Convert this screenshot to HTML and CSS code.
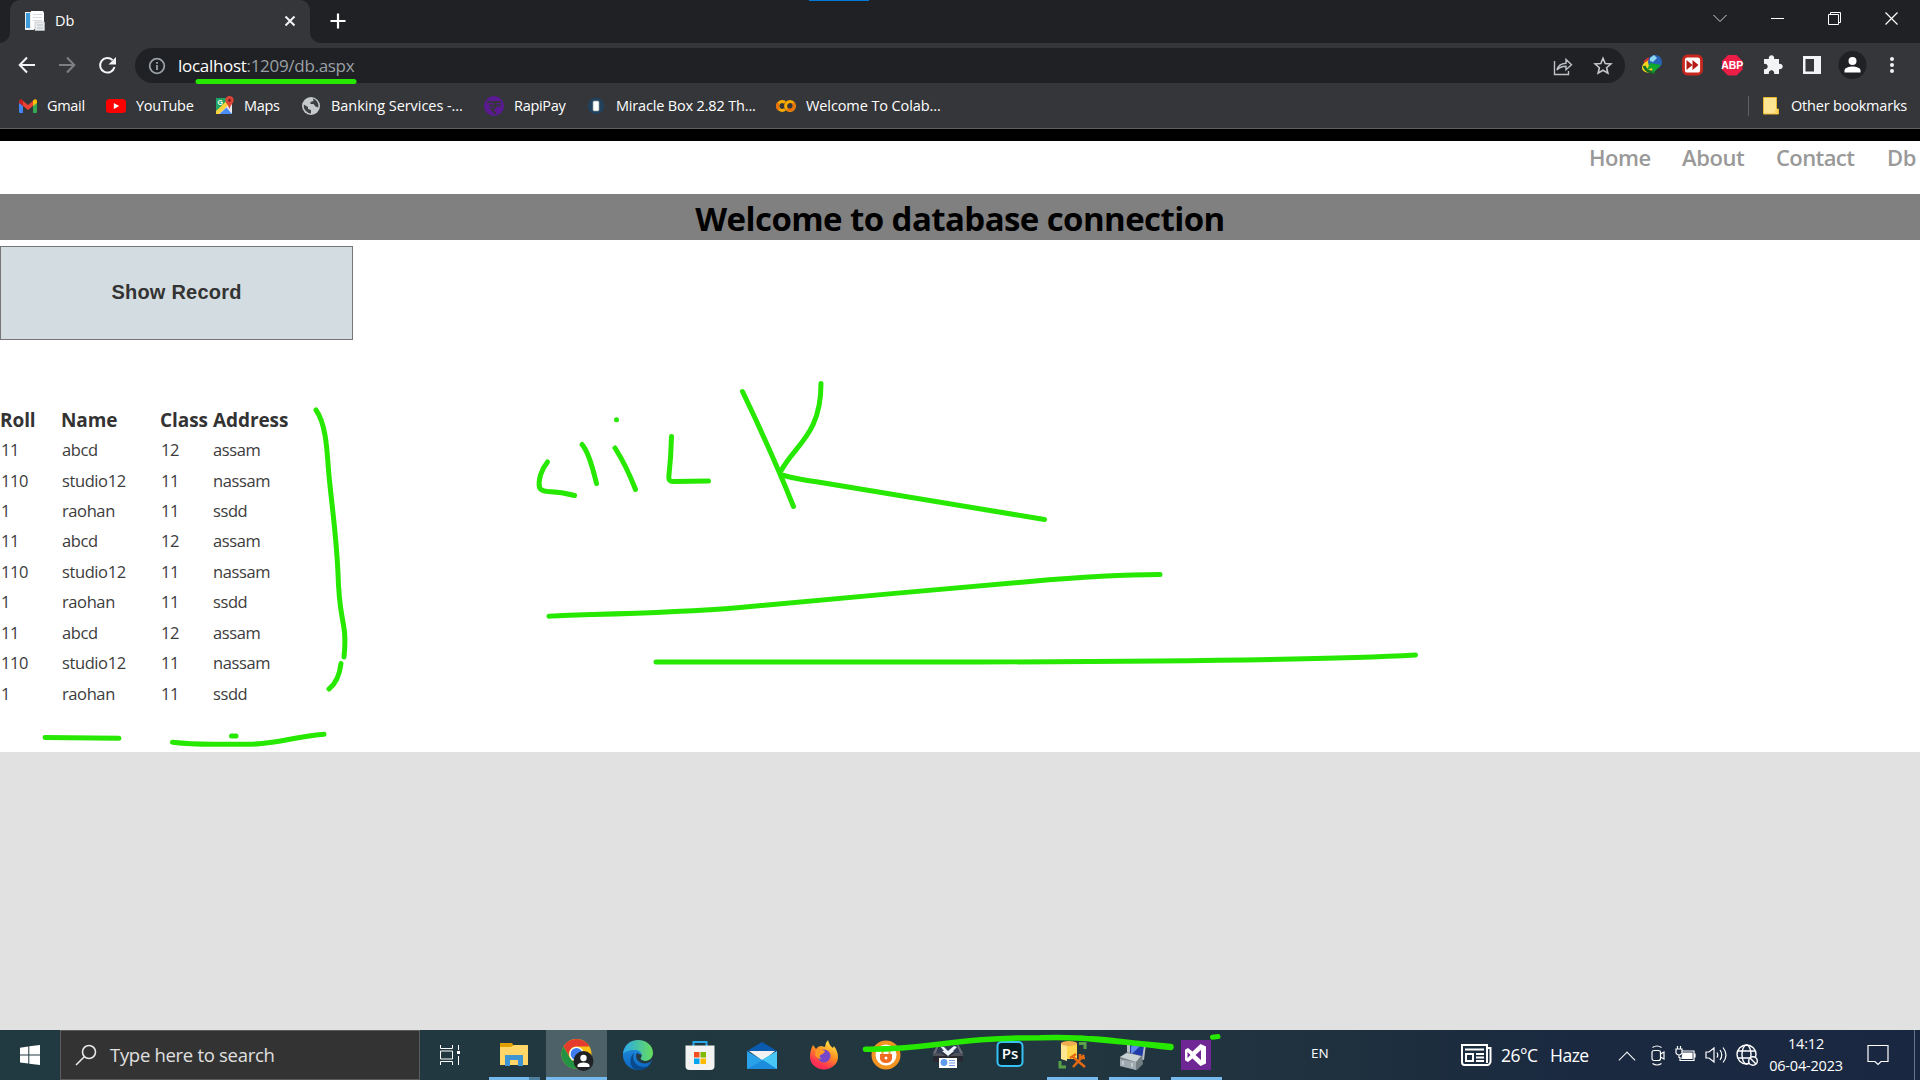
FILE: index.html
```html
<!DOCTYPE html>
<html lang="en">
<head>
<meta charset="utf-8">
<title>Db</title>
<link rel="stylesheet" href="styles.css">
</head>
<body>
<div class="screen">
  <header class="tabstrip">
    <div class="tab">
      <svg class="favicon" width="20" height="20" viewBox="0 0 20 20"><path fill="#e8edf0" d="M0 1h9v18H0z"/><path fill="#3f9bd8" d="M1 2h4v15H1z"/><path fill="#fff" d="M6 0h12l1 2v16H6z"/><path fill="#d5dade" d="M8 3h9v1H8zM8 6h9v1H8zM8 9h9v1H8z"/><path fill="#e9ecee" stroke="#b6bcc0" stroke-width=".7" d="M10 11h9.500v8.500H10z"/><path stroke="#b6bcc0" d="M12 14h6M12 17h6"/></svg>
      <span class="tab-title">Db</span>
      <svg class="tab-close" width="12" height="12" viewBox="0 0 12 12"><path stroke="#f1f3f4" stroke-width="2" d="M1.500 1.500l9 9M10.500 1.500l-9 9"/></svg>
    </div>
    <svg class="new-tab" width="16" height="16" viewBox="0 0 16 16"><path stroke="#fff" stroke-width="2.200" d="M8 .5v15M.5 8h15"/></svg>
    <div class="window-controls">
      <svg width="58" height="36" viewBox="0 0 58 36" fill="none" stroke="#d0d1d2"><path d="M22.500 15l6.500 6.500 6.500-6.500"/></svg>
      <svg width="57" height="36" viewBox="0 0 57 36" fill="none" stroke="#fff"><path d="M22 18.500h13"/></svg>
      <svg width="57" height="36" viewBox="0 0 57 36" fill="none" stroke="#fff"><path d="M22.500 14.500h10v10h-10zM24.500 14.500v-2h10v10h-2"/></svg>
      <svg width="57" height="36" viewBox="0 0 57 36" fill="none" stroke="#fff" stroke-width="1.200"><path d="M22.500 12.500l12 12M34.500 12.500l-12 12"/></svg>
    </div>
  </header>

  <div class="toolbar">
    <svg class="tool" width="40" height="40" viewBox="0 0 40 40" fill="none" stroke="#f1f3f4" stroke-width="2"><path d="M28 20H13M20 12.500L12.700 20l7.300 7.500"/></svg>
    <svg class="tool" width="40" height="40" viewBox="0 0 40 40" fill="none" stroke="#7d7f82" stroke-width="2"><path d="M12 20h15M20 12.500l7.300 7.500-7.300 7.500"/></svg>
    <svg class="tool" width="40" height="40" viewBox="0 0 40 40" fill="none" stroke="#f1f3f4" stroke-width="2"><path d="M27.500 22a7.300 7.300 0 1 1-1.900-6.900"/><path fill="#f1f3f4" stroke="none" d="M29 12v7.500h-7.500z"/></svg>
    <div class="omnibox">
      <svg width="18" height="18" viewBox="0 0 18 18" fill="none" stroke="#9aa0a6" stroke-width="1.800"><circle cx="9" cy="9" r="7.300"/><path d="M9 8v5M9 5v1.800"/></svg>
      <span class="url"><b>localhost</b>:1209/db.aspx</span>
      <svg class="share" width="20" height="20" viewBox="0 0 20 20" fill="none" stroke="#bdc1c6" stroke-width="1.400"><path d="M1.500 5v13.500h14V15M4 14c.8-4 3.500-6.500 9-6.800V3.500l5.500 5.200-5.500 5v-3.500c-4.500 0-7 1.300-9 3.800z"/></svg>
      <svg width="20" height="20" viewBox="0 0 20 20" fill="none" stroke="#c5c8cb" stroke-width="1.600"><path d="M10 2.300l2.200 5.200 5.700.5-4.300 3.700 1.300 5.500-4.900-2.900-4.900 2.900 1.300-5.500L2.100 8l5.700-.5z"/></svg>
    </div>
    <div class="extensions">
      <svg width="40" height="40" viewBox="0 0 40 40"><ellipse cx="18" cy="21" rx="8.500" ry="6" fill="#f5d51e" transform="rotate(-25 18 21)"/><path d="M12 21q3 7 11 6" fill="none" stroke="#176b26" stroke-width="3"/><path d="M12 17l5-4" stroke="#d33" stroke-width="2"/><circle cx="23" cy="17" r="7" fill="#2862b8"/><path d="M18 13l4-3 3 3-4 4-3-1z" fill="#8ed6f2"/><path d="M18 18l11 2-8 8-1-5-5 2z" fill="#10a82d"/></svg>
      <svg width="40" height="40" viewBox="0 0 40 40"><rect x="11.500" y="11" width="18" height="18" rx="4" fill="#fff" stroke="#c8271e" stroke-width="2.800"/><path fill="#b51b16" d="M14.500 15l6 5-6 5zM20.500 15l6 5-6 5z"/></svg>
      <svg width="40" height="40" viewBox="0 0 40 40"><path fill="#ed1e45" d="M16 10h8.500l6 6v8.500l-6 6H16l-6-6V16z"/><text x="20.300" y="24" class="abp">ABP</text></svg>
      <svg width="40" height="40" viewBox="0 0 40 40"><path fill="#f1f3f4" d="M12 14h5a2.700 2.700 0 1 1 5 0h5v5a2.700 2.700 0 1 1 0 5v5h-5a2.700 2.700 0 1 0-5 0h-5v-5a2.700 2.700 0 1 0 0-5z"/></svg>
      <svg width="40" height="40" viewBox="0 0 40 40"><path fill="#f1f3f4" fill-rule="evenodd" d="M11 11h18v18H11zM13.500 14v12.500h8.500V14z"/></svg>
      <svg width="40" height="40" viewBox="0 0 40 40"><circle cx="20.500" cy="20" r="14" fill="#202124"/><circle cx="20.500" cy="16" r="4" fill="#fff"/><path fill="#fff" d="M12.500 27.500v-2c0-3 5-4 8-4s8 1 8 4v2z"/></svg>
      <svg width="40" height="40" viewBox="0 0 40 40" fill="#f1f3f4"><circle cx="20" cy="14" r="2"/><circle cx="20" cy="20" r="2"/><circle cx="20" cy="26" r="2"/></svg>
    </div>
  </div>

  <nav class="bookmarks">
    <div class="bm bm-gmail"><svg width="20" height="20" viewBox="0 0 20 20"><path fill="#4285f4" d="M1 5h4v12H2q-1 0-1-1z"/><path fill="#34a853" d="M15 5h4v11q0 1-1 1h-3z"/><path fill="#ea4335" d="M4 4l6 5 6-5v5l-6 5-6-5z"/><path fill="#c5221f" d="M1 5.500C1 3 3 2.500 5 4.500V10L1 7z"/><path fill="#fbbc04" d="M19 5.500c0-2.500-2-3-4-1V10l4-3z"/></svg><span>Gmail</span></div>
    <div class="bm bm-yt"><svg width="20" height="20" viewBox="0 0 20 20"><rect y="3" width="20" height="14" rx="3.500" fill="#f00"/><path fill="#fff" d="M7.800 7v6l5.400-3z"/></svg><span>YouTube</span></div>
    <div class="bm bm-maps"><svg width="20" height="20" viewBox="0 0 20 20"><rect x="1" y="2" width="16" height="16" rx="1" fill="#e8eaed"/><path fill="#1fa463" d="M1 2h14L1 16z"/><path fill="#fcd23c" d="M1 15L11 5.500l3 3L4 18H1z"/><path fill="#4b8df8" d="M4.500 18l7-6.500L17 18z"/><text x="2.500" y="9" class="mini">G</text><path fill="#db4437" d="M14.500 0a4.200 4.200 0 0 1 4.200 4.300c0 3-3.300 4.500-3.800 8.200h-.8c-.5-3.700-3.800-5.200-3.800-8.200A4.200 4.200 0 0 1 14.500 0z"/><circle cx="14.500" cy="4.300" r="1.500" fill="#7b231b"/></svg><span>Maps</span></div>
    <div class="bm bm-bank"><svg width="20" height="20" viewBox="0 0 20 20"><circle cx="10" cy="10" r="9" fill="#c6c9cc"/><path fill="#3c4043" d="M12 2.500a7.500 7.500 0 0 1 5.200 9l-2.700-1-2-2.500H9.500V6l3-1zM2.800 8.500L7 11v2l3 1v3.400a7.500 7.500 0 0 1-7.200-8.900z"/></svg><span>Banking Services -...</span></div>
    <div class="bm bm-rapi"><svg width="20" height="20" viewBox="0 0 20 20"><circle cx="10" cy="10" r="10" fill="#5b1a91"/><path fill="none" stroke="#35363a" stroke-width="1.800" d="M3 6h14M5 9.500h12M8 6c6 0 5 7-1 7l5 5"/></svg><span>RapiPay</span></div>
    <div class="bm bm-miracle"><svg width="20" height="20" viewBox="0 0 20 20"><circle cx="10" cy="10" r="8.300" fill="#21415c"/><rect x="7" y="5" width="6" height="10" rx="1" fill="#fff" stroke="#899" stroke-width=".7"/></svg><span>Miracle Box 2.82 Th...</span></div>
    <div class="bm bm-colab"><svg width="20" height="20" viewBox="0 0 20 20" fill="none" stroke-width="3"><path stroke="#f9ab00" d="M9 13.400A4.400 4.400 0 1 1 9 6.600"/><circle cx="14" cy="10" r="4.400" stroke="#f9ab00"/><path stroke="#e8710a" d="M10.900 13.100A4.400 4.400 0 0 0 17.100 6.900M2.500 7A4.400 4.400 0 0 0 3 13.500"/></svg><span>Welcome To Colab...</span></div>
    <div class="bm bm-other"><svg width="20" height="20" viewBox="0 0 20 20"><path fill="#ffe591" stroke="#e9b92f" d="M2.500 1.500h13v11.500h2v5h-15z"/><path fill="#ffd35a" d="M14 14h3v4h-3z"/></svg><span>Other bookmarks</span></div>
  </nav>

  <main class="page">
    <ul class="menu"><li class="m-home">Home</li><li class="m-about">About</li><li class="m-contact">Contact</li><li class="m-db">Db</li></ul>
    <h1 class="banner"><span>Welcome to database connection</span></h1>
    <button class="show">Show Record</button>
    <table class="records">
      <colgroup><col class="c-roll"><col class="c-name"><col class="c-class"><col class="c-address"></colgroup>
      <thead><tr><th>Roll</th><th>Name</th><th>Class</th><th>Address</th></tr></thead>
      <tbody>
        <tr><td>11</td><td>abcd</td><td>12</td><td>assam</td></tr>
        <tr><td>110</td><td>studio12</td><td>11</td><td>nassam</td></tr>
        <tr><td>1</td><td>raohan</td><td>11</td><td>ssdd</td></tr>
        <tr><td>11</td><td>abcd</td><td>12</td><td>assam</td></tr>
        <tr><td>110</td><td>studio12</td><td>11</td><td>nassam</td></tr>
        <tr><td>1</td><td>raohan</td><td>11</td><td>ssdd</td></tr>
        <tr><td>11</td><td>abcd</td><td>12</td><td>assam</td></tr>
        <tr><td>110</td><td>studio12</td><td>11</td><td>nassam</td></tr>
        <tr><td>1</td><td>raohan</td><td>11</td><td>ssdd</td></tr>
      </tbody>
    </table>
  </main>
  <div class="backdrop"></div>

  <footer class="taskbar">
    <div class="start"><svg width="20" height="20" viewBox="0 0 20 20" fill="#fff"><path d="M0 2.700l8.300-1.200v8H0zM9.300 1.300L20 0v9.500H9.300zM0 10.500h8.300v8.100L0 17.400zM9.300 10.500H20V20L9.300 18.700z"/></svg></div>
    <div class="search"><svg width="22" height="22" viewBox="0 0 22 22" fill="none" stroke="#e8e8e8" stroke-width="1.600"><circle cx="14" cy="8" r="6.500"/><path d="M9.300 12.700L1 21"/></svg><span>Type here to search</span></div>
    <div class="taskview"><svg width="20" height="20" viewBox="0 0 20 20" fill="none" stroke="#fff"><path d="M.5 0v3.500h12V0M.5 6h12v8H.5zM.5 20v-3.500h12V20M18.500 0v5M18.500 11v9"/><path fill="#fff" stroke="none" d="M17 6h3v3h-3z"/></svg></div>
    <div class="apps">
      <div class="app open stacked"><svg width="30" height="30" viewBox="0 0 30 30"><path fill="#e0a100" d="M1 3h12l2 3v5H1z"/><path fill="#ffd667" d="M1 7h11l3-2h14v20H1z"/><path fill="#3f94d2" d="M6 15h18v11h-5v-6h-8v6H6z"/></svg></div>
      <div class="app open active"><svg width="34" height="34" viewBox="0 0 34 34"><circle cx="15.500" cy="16" r="15" fill="#fbc116"/><path fill="#e33b2e" d="M2.500 8.500A15 15 0 0 1 28.500 8.500H15.500A7.500 7.500 0 0 0 9 20z"/><path fill="#229342" d="M2.500 8.500A15 15 0 0 0 15.500 31l6.500-11A7.500 7.500 0 0 1 9 20z"/><circle cx="15.500" cy="16" r="7.300" fill="#fff"/><circle cx="15.500" cy="16" r="5.900" fill="#3d7df0"/><circle cx="22.500" cy="23" r="10" fill="#202124"/><circle cx="22.500" cy="20" r="3.200" fill="#fff"/><path fill="#fff" d="M16.500 29v-2q1-2.500 6-2.500t6 2.500v2z"/></svg></div>
      <div class="app"><svg width="30" height="30" viewBox="0 0 30 30"><defs><linearGradient id="ea"><stop stop-color="#2aa7ec"/><stop offset="1" stop-color="#67de5c"/></linearGradient><linearGradient id="eb" x2="0" y2="1"><stop stop-color="#2390de"/><stop offset="1" stop-color="#0b67c4"/></linearGradient></defs><path fill="url(#eb)" d="M0 14C1 5 8 1 15 3c6 2 8 8 4 11-2 1-3 4-1 6 3 3 8 2 11 0-2 6-8 10-14 10A15 15 0 0 1 0 14z"/><path fill="url(#ea)" d="M0 14C1 5 7 0 15 0c9 0 15 6 15 13 0 5-4 8-8 8-3 0-5-1-5-2 0-1 1.500-1.500 1.500-4 0-3-3-5-7-5C6 10 2 12 0 14z"/><path fill="#0a4a8c" d="M11 13c-3 8 3 14 10 14 3 0 6-2 7.500-5-1 4-6 8-13.500 8C7 30 5 18 11 13z"/><path fill="#233943" d="M14 13c-3 4 1 10.500 8 10.500 3 0 5-1 6.500-2.500v-.7c-5 2-9.500.5-11-1.300 0-1 1-1.500 1-4z"/></svg></div>
      <div class="app"><svg width="30" height="30" viewBox="0 0 30 30"><path fill="none" stroke="#28a8ea" stroke-width="2" d="M8.500 7V2h13v5"/><path fill="#f2f2f2" d="M.5 5.500h29V26q0 4-4 4h-21q-4 0-4-4z"/><path fill="#f25022" d="M9 12h5.500v5.500H9z"/><path fill="#7fba00" d="M15.500 12H21v5.500h-5.500z"/><path fill="#00a4ef" d="M9 18.500h5.500V24H9z"/><path fill="#ffb900" d="M15.500 18.500H21V24h-5.500z"/></svg></div>
      <div class="app"><svg width="30" height="30" viewBox="0 0 30 30"><path fill="#0a5ab0" d="M0 11l15-9 15 9z"/><path fill="#f2f2f2" d="M2 11h26L16 21z"/><path fill="#2aa2ea" d="M0 11l15 9 15-9v18H0z"/><path fill="#49c8f5" d="M15 20l15-9v18z"/><path fill="#1c8ddd" d="M0 29h30L16 20z"/></svg></div>
      <div class="app"><svg width="30" height="30" viewBox="0 0 30 30"><defs><linearGradient id="fx" x1=".8" y1="0" x2=".3" y2="1"><stop stop-color="#fff44f"/><stop offset=".45" stop-color="#ff9320"/><stop offset=".85" stop-color="#ff2f54"/></linearGradient></defs><path fill="url(#fx)" d="M4 5l3 4q2-3 5-3l4 1q0-4 3-7 1 5 5 8l1-2c3 4 4 8 4 11a14 12.500 0 0 1-28 0c0-5 1-8 3-12z"/><circle cx="15" cy="16" r="6.500" fill="#7648c9"/><path fill="#ff9a27" d="M7 10q6-1 9 1-1 3-5 4-1 3 2 4-5 0-7-4z"/></svg></div>
      <div class="app"><svg width="30" height="30" viewBox="0 0 30 30"><circle cx="15" cy="15" r="12.500" fill="#fff" stroke="#f39322" stroke-width="4"/><path fill="#f06c23" d="M9 14h12v5q-1 4-6 4t-6-4z"/><path fill="none" stroke="#f5a33c" stroke-width="2" d="M11.500 14V9.500q3.500-4 7 0V14"/><circle cx="15" cy="18" r="1.500" fill="#fff"/></svg></div>
      <div class="app"><svg width="30" height="30" viewBox="0 0 30 30"><path fill="#6a6d78" d="M5 4h20l5 9H0z"/><path fill="#333c55" d="M6 5h18l3 8H3z"/><path fill="#eff3fb" d="M7 6l4 1 4 4 6-5 3 1-9 9z"/><path fill="#292a31" d="M0 13h30v9H0z"/><path fill="#50525b" d="M0 13h8l7 4 7-4h8v3H0z"/><path fill="#eff3fb" d="M9 11h12l-6 5z"/><path fill="#fff" d="M6 18h18v10H6z"/><circle cx="11" cy="22.500" r="3.400" fill="#5f9ced"/><path stroke="#729be9" d="M16 20.500h6M16 23h6M16 25.500h6"/></svg></div>
      <div class="app ps-app"><svg width="28" height="28" viewBox="0 0 28 28"><rect x="1.500" y="2" width="25" height="24" rx="4" fill="#071e27" stroke="#38c1f3" stroke-width="2"/><text x="14" y="19" class="ps">Ps</text></svg></div>
      <div class="app open"><svg width="30" height="30" viewBox="0 0 30 30"><path fill="#ffd64b" d="M4 3h16v16H4z"/><path fill="#ffe791" d="M4 3h6v18l-6-2z"/><ellipse cx="12" cy="3.500" rx="8" ry="2.500" fill="#efad50"/><path stroke="#58a149" stroke-width="3" fill="none" d="M22 3.500h6V9M3 21v6h6"/><path stroke="#e46a12" stroke-width="2.500" fill="none" d="M16 17l12 10M27 15L16 27M13 18l6-4M23 14v4h5"/></svg></div>
      <div class="app open"><svg width="30" height="30" viewBox="0 0 30 30"><path fill="#b5bdc0" d="M8 1l19 3-2 16-17-2z"/><path fill="#2139a9" d="M11 4l14 2-2 12-12-2z"/><path fill="#6089e8" d="M14 5l7 1-9 9V7z"/><path fill="#737e82" d="M1 17l7-5 15 4 1 8-6 6-17-4z"/><path fill="#c8d1d4" d="M1 17l7-4 14 3-5 6z"/><path fill="#9eaaaf" d="M1 19l16 3v8L1 26z"/><path stroke="#e4e8e9" d="M4 21v4M13 23v4"/></svg></div>
      <div class="app open"><svg width="30" height="30" viewBox="0 0 30 30"><path fill="#6e2795" d="M0 0h30v30H0z"/><path fill="#fff" fill-rule="evenodd" d="M19.500 4L25 6.500v17L19.500 26l-8-7.500L7 22l-3-1.700V9.700L7 8l4.500 3.500zM20 10l-5.500 5 5.500 5zM6.500 12v6l3-3z"/></svg></div>
    </div>
    <div class="lang">EN</div>
    <div class="weather"><svg width="31" height="22" viewBox="0 0 31 22" fill="none" stroke="#fff" stroke-width="2"><path d="M26 4h3.500v14q-1 3-3 3h-23Q1 21 1 18V1h25v18"/><path d="M4 5.500h19M15 10h8M15 13.500h8M15 17h8"/><path d="M5 10h7v7H5z"/></svg><span class="temp">26°C</span><span class="haze">Haze</span></div>
    <div class="tray">
      <svg width="17" height="22" viewBox="0 0 17 22" fill="none" stroke="#fff" stroke-width="1.200"><rect x="2" y="6.500" width="8.500" height="10" rx="2"/><path d="M10.500 10l3.500-2v7l-3.500-2M2.500 3.500q4.500-3 9 0M2.500 19.500q4.500 3 9 0"/></svg>
      <svg width="22" height="22" viewBox="0 0 22 22" fill="none" stroke="#fff" stroke-width="1.200"><path d="M7 7h12v9.500H5V13M20 9.500v4M1 5h6v4q-1 2-3 2T1 9zM2.500 2v3M5.500 2v3M4 11v3"/><path fill="#fff" d="M8 9h9v5.500H7z"/></svg>
      <svg width="23" height="22" viewBox="0 0 23 22" fill="none" stroke="#fff" stroke-width="1.200"><path d="M1 8h3l5-4v14l-5-4H1zM12 8.500q1.500 2.500 0 5M15 6q3.500 5 0 10M18 3.500q6 7.500 0 15"/></svg>
      <svg width="22" height="22" viewBox="0 0 22 22" fill="none" stroke="#fff" stroke-width="1.400"><circle cx="10.500" cy="10.500" r="9.500"/><ellipse cx="10.500" cy="10.500" rx="4.500" ry="9.500"/><path d="M2 7h17M2 14h17"/><circle cx="17" cy="17" r="4.300" fill="#1b2a40"/><path d="M14 14l6 6"/></svg>
    </div>
    <div class="clock"><span class="time">14:12</span><span class="date">06-04-2023</span></div>
    <svg class="notify" width="22" height="22" viewBox="0 0 22 22" fill="none" stroke="#fff" stroke-width="1.200"><path d="M1 1.500h20v16h-7l-3 3-3-3H1z"/></svg>
    <div class="peek"></div>
  </footer>

  <div class="accent"></div>
  <svg class="ink" width="1920" height="1080" viewBox="0 0 1920 1080">
    <path d="M198 81.500H354"/>
    <path d="M547.500 462C541 470 538 480 539.500 487.500Q541 491 548 491.500Q562 492 574.500 495.500"/>
    <path d="M582 444.500Q589 452 596.500 483.500M615 448Q626 465 635.500 489.500M616.500 419.700v.1"/>
    <path d="M671.500 436.500Q671 458 668.800 477Q668.500 481.500 673 481.500L708.500 481"/>
    <path d="M742.500 391.500C760 428 776 463 793.500 506.500M821 383.500C821 434 796 444 781.500 470M782 475Q796 479 818 482L1044.500 519.500"/>
    <path d="M549 616.300C567 614 650 615 740 607.500C850 598 925 590 1030 581.500C1080 577 1125 574.500 1160 574.500"/>
    <path d="M656 662H980C1160 661.500 1330 660 1415.500 655"/>
    <path d="M316 410C326 424 327 450 328.500 470C331 500 336 530 338 573C339 610 342 612 344.500 632Q345.500 644 344 657M341 663.500Q339 681 329 689"/>
    <path d="M45 737.500L119 738.300M172.500 742.300Q190 744.300 212 744.300H248C280 744 290 737 324 734.300M231.500 736h4.500"/>
    <path class="broad" d="M865.500 1049.200C930 1050 950 1037.700 1040 1037.700C1095 1036 1130 1043 1171 1047.500M1080 1038Q1125 1042 1171 1046.500"/>
    <path d="M1212.500 1037.300l5.500-.8"/>
  </svg>
</div>
</body>
</html>
```
FILE: styles.css
```css
* { box-sizing: border-box; }
body { margin: 0; font-family: "Open Sans", "Noto Sans", sans-serif; overflow: hidden; }
svg { display: block; flex: none; }
.screen { position: relative; width: 1920px; height: 1080px; display: flex; flex-direction: column; background: #e1e1e1; white-space: nowrap; }

.tabstrip { height: 43px; background: #202124; display: flex; padding-left: 10px; flex: none; }
.tab { position: relative; width: 300px; height: 43px; background: #35363a; border-radius: 10px 10px 0 0; display: flex; align-items: center; padding: 0 14px 1px 15px; }
.tab::before, .tab::after { content: ""; position: absolute; bottom: 0; width: 10px; height: 10px; }
.tab::before { left: -10px; background: radial-gradient(circle at 0 0, #202124 9.5px, #35363a 10px); }
.tab::after { right: -10px; background: radial-gradient(circle at 100% 0, #202124 9.5px, #35363a 10px); }
.tab-title { margin: -2px 0 0 10px; font-size: 14.5px; color: #fff; }
.tab-close { margin-left: auto; }
.new-tab { margin: 13px 0 0 20px; }
.window-controls { display: flex; margin-left: auto; }

.toolbar { height: 45px; background: #35363a; display: flex; align-items: center; padding: 0 7px 0 7px; flex: none; }
.omnibox { width: 1490px; height: 35px; margin-left: 8px; border-radius: 18px; background: #202124; display: flex; align-items: center; padding: 0 12px 0 13px; }
.tool, .extensions { margin-bottom: 1px; }
.url { margin-left: 12px; font-size: 17px; letter-spacing: -.3px; color: #9aa0a6; }
.url b { font-weight: 400; color: #fff; }
.share { margin: 0 20px 0 auto; }
.extensions { display: flex; margin-left: 7px; }
.abp { font: 700 10.5px "Liberation Sans", sans-serif; fill: #fff; text-anchor: middle; }

.bookmarks { height: 41px; background: #35363a; border-bottom: 1px solid #5f6063; display: flex; align-items: center; padding: 0 0 5px 18px; color: #fff; font-size: 14.5px; letter-spacing: -.3px; flex: none; }
.bm { display: flex; align-items: center; gap: 10px; }
.bm-gmail { width: 88px; gap: 9px; }
.bm-yt { width: 109px; gap: 10px; }
.bm-maps { width: 86px; gap: 9px; }
.bm-bank { width: 183px; letter-spacing: -.05px; }
.bm-rapi { width: 102px; }
.bm-miracle { width: 190px; letter-spacing: -.17px; }
.bm-colab { width: 170px; letter-spacing: -.1px; }
.bm-other { margin-left: auto; width: 172px; height: 20px; border-left: 1px solid #606165; padding-left: 12px; letter-spacing: -.2px; }
.mini { font: 700 7px "Liberation Sans", sans-serif; fill: #fff; }

.page { height: 623px; border-top: 12px solid #000; background: #fff; flex: none; color: #333; }
.menu { list-style: none; margin: 0; padding: 0; height: 53px; display: flex; justify-content: flex-end; font-size: 22px; line-height: 32px; font-weight: 600; color: #999; }
.m-home { width: 93px; letter-spacing: -.5px; }
.m-about { width: 94px; letter-spacing: -.4px; }
.m-contact { width: 111px; letter-spacing: -.6px; }
.m-db { width: 33px; letter-spacing: -.4px; }
.banner { height: 46px; margin: 0; background: #808080; color: #000; display: flex; align-items: center; justify-content: center; font-size: 33px; line-height: 46px; letter-spacing: -.58px; padding-top: 3px; }
.show { display: block; width: 353px; height: 94px; margin: 6px 0 0; padding: 0 0 2px; background: #d3dce0; border: 1px solid #767676; border-radius: 0; font: 700 20px "Liberation Sans", sans-serif; letter-spacing: .22px; color: #333; }
.records { margin-top: 65px; width: 320px; table-layout: fixed; border-collapse: collapse; }
.c-roll { width: 61px; }
.c-name { width: 99px; }
.c-class { width: 52px; }
.c-address { width: 108px; }
.records th, .records td { padding: 0; text-align: left; height: 30.45px; line-height: 28px; }
.records td { padding-left: 1px; }
.records th:last-child, .records td:last-child { padding-left: 1px; }
.records th { font-size: 19px; font-weight: 700; letter-spacing: -.08px; }
.records td { font-size: 16.5px; letter-spacing: -.4px; color: #3c3c3c; padding-bottom: 1px; }

.backdrop { flex: 1; background: #e1e1e1; }

.taskbar { height: 50px; flex: none; display: flex; align-items: center; background: linear-gradient(90deg, #213941 0%, #223740 55%, #1f303e 70%, #1a2940 82%, #1a2741 100%); color: #fff; }
.start { width: 60px; padding-left: 20px; }
.search { width: 360px; height: 50px; background: #333; border: 1px solid #5c5c5c; display: flex; align-items: center; padding-left: 14px; font-size: 18.5px; color: #e0e0e0; letter-spacing: -.3px; }
.search span { margin: -2px 0 0 13px; }
.taskview { width: 63px; padding-left: 20px; }
.apps { display: flex; height: 50px; }
.app { position: relative; width: 62px; display: flex; align-items: center; justify-content: center; }
.app.open::after { content: ""; position: absolute; left: 6px; right: 5px; bottom: 0; height: 3px; background: #76b9ed; }
.app.stacked::after { background: linear-gradient(90deg, #76b9ed 40px, #50809f 40px); }
.app.active { background: #4d6168; border-left: 1px solid #213941; padding-left: 2px; }
.app.active::after { left: 0; right: 0; }
.ps-app { padding-bottom: 2px; }
.ps { font: 600 15px "Open Sans", sans-serif; fill: #fff; text-anchor: middle; }
.lang { margin: 0 0 4px 84px; width: 150px; font-size: 13.5px; letter-spacing: -.1px; }
.weather { display: flex; align-items: center; width: 158px; font-size: 17.5px; letter-spacing: -.5px; }
.temp { margin-left: 9px; width: 49px; }
.tray { display: flex; align-items: center; gap: 8px; }
.tray::before { content: ""; width: 11px; height: 11px; border: solid #fff; border-width: 1.3px 0 0 1.3px; transform: rotate(45deg); margin: 9px 9px 0 2px; }
.clock { width: 90px; margin-left: 3px; display: flex; flex-direction: column; align-items: center; font-size: 14.5px; line-height: 22px; letter-spacing: -.2px; }
.notify { margin-left: 16px; }
.peek { width: 1px; height: 50px; background: #68758a; margin: 0 5px 0 auto; }

.accent { position: absolute; left: 809px; top: 0; width: 60px; height: 1px; background: #0078d7; }
.ink { position: absolute; left: 0; top: 0; fill: none; stroke: #27e800; stroke-width: 5; stroke-linecap: round; stroke-linejoin: round; }
.broad { stroke-width: 5.5; }
```
